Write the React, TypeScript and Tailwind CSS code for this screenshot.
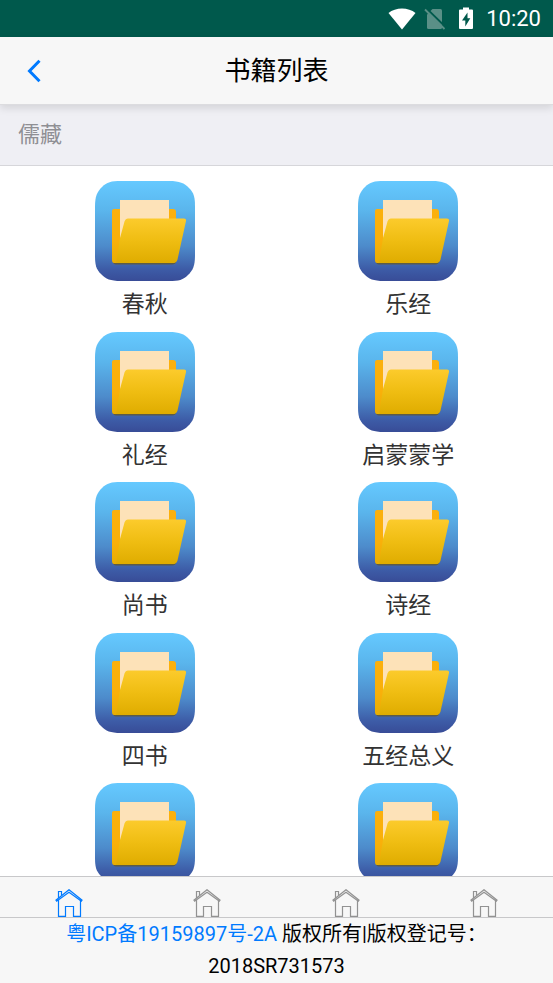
import clsx from 'clsx';

const books = ['春秋', '乐经', '礼经', '启蒙蒙学', '尚书', '诗经', '四书', '五经总义', '', ''];

const tabs = ['首页', '分类', '书架', '我的'];

const StatusBar: React.FC = () => (
  <div className="flex h-[37px] shrink-0 items-center justify-end bg-[#00594c] pr-3 text-white">
    <svg className="mr-2 h-[22px] w-7" viewBox="0 0 28 22" fill="currentColor">
      <path d="M14 21.5 0.5 5C4 2 9 0.4 14 0.4S24 2 27.5 5Z" />
    </svg>
    <svg className="mr-3 h-[22px] w-[22px]" viewBox="0 0 22 22">
      <path d="M8.500 1H16.500Q18 1 18 2.500V19.500Q18 21 16.500 21H4.500Q3 21 3 19.500V6.500Z" fill="#5a9087" />
      <path d="M2.500 0.500 21.500 19" stroke="#00594c" strokeWidth="2" />
      <path d="M1 1.500 20.500 21" stroke="#5a9087" strokeWidth="1.800" />
    </svg>
    <svg className="mr-3 h-[23px] w-4" viewBox="0 0 16 23">
      <path d="M5 0.500H11V2.500H14Q15 2.500 15 3.500V21Q15 22 14 22H2Q1 22 1 21V3.500Q1 2.500 2 2.500H5Z" fill="#fff" />
      <path d="M9.500 5.500 4 13.500H7.300V19.500L12.300 11.300H9.500Z" fill="#00594c" />
    </svg>
    <span className="text-[22px] leading-6">10:20</span>
  </div>
);

const FolderIcon: React.FC = () => (
  <svg className="h-[100px] w-[100px] shrink-0" viewBox="0 0 100 100" aria-hidden="true">
    <defs>
      <linearGradient id="sky" x1="0" y1="0" x2="0" y2="1">
        <stop offset="0" stopColor="#65c9ff" />
        <stop offset="0.3" stopColor="#5ab5ec" />
        <stop offset="0.65" stopColor="#4d8bcb" />
        <stop offset="0.88" stopColor="#3d5ca7" />
        <stop offset="1" stopColor="#384c97" />
      </linearGradient>
      <linearGradient id="back" x1="0" y1="0" x2="0" y2="1">
        <stop offset="0" stopColor="#fbb00d" />
        <stop offset="0.6" stopColor="#f9b00a" />
        <stop offset="1" stopColor="#e6ae04" />
      </linearGradient>
      <linearGradient id="front" x1="0" y1="0" x2="0" y2="1">
        <stop offset="0" stopColor="#fccb2c" />
        <stop offset="0.5" stopColor="#efbd12" />
        <stop offset="1" stopColor="#dfac00" />
      </linearGradient>
    </defs>
    <path
      d="M26 0H74C85 0 89 2 94 7S100 16 100 26V74C100 85 98 89 93 94S84 100 74 100H26C15 100 11 98 6 93S0 84 0 74V26C0 15 2 11 7 6S16 0 26 0Z"
      fill="url(#sky)"
    />
    <path d="M18 80H81Q81 83.500 77 83.500H21Q18 83.500 18 80Z" fill="#62592f" opacity="0.8" />
    <path d="M19 28H78Q81 28 81 31V80Q80 82 78 82H19Q17 82 17 79V30Q17 28 19 28Z" fill="url(#back)" />
    <path d="M25 19H74V60H25Z" fill="#fde2b8" />
    <path
      d="M33 37.500H89Q91.500 37.500 91 40L82.500 78.500Q81.500 82 78 82H21L25 57 29.500 40.500Q30.500 37.500 33 37.500Z"
      fill="url(#front)"
    />
  </svg>
);

const HouseIcon: React.FC = () => (
  <svg className="h-7 w-7" viewBox="0 0 28 28" fill="none" stroke="currentColor" strokeWidth="1.200" aria-hidden="true">
    <path d="M0.500 11.500 14 0.700 27.500 11.500M1.200 12.500 14 3.300 26.800 12.500" />
    <path d="M3.500 9V2.500H6.500V6.500M3.500 11V27.400H10.500V17.500H18.500V27.400H25.500V11" />
  </svg>
);

const App: React.FC = () => {
  return (
    <div
      lang="zh-CN"
      className="flex h-screen flex-col overflow-hidden bg-white font-[Roboto,'Noto_Sans_CJK_SC',sans-serif] text-black"
    >
      <StatusBar />

      <header className="relative z-10 grid h-[68px] shrink-0 grid-cols-[68px_1fr_68px] items-center border-b border-[#dcdcdf] bg-[#f7f7f7] shadow-[0_3px_8px_rgba(0,0,0,0.12)]">
        <button type="button" aria-label="返回" className="flex h-full items-center justify-center text-[#007aff]">
          <svg className="h-6 w-4" viewBox="0 0 16 24" fill="none" stroke="currentColor" strokeWidth="3">
            <path d="M13.500 1.700 3.500 12 13.500 22.300" />
          </svg>
        </button>
        <h1 className="text-center text-[26px] leading-8">书籍列表</h1>
      </header>

      <main className="flex min-h-0 flex-1 flex-col">
        <h2 className="flex h-[61px] shrink-0 items-center border-b border-[#d6d6da] bg-[#efeff4] px-[18px] text-[22px] leading-8 text-[#8f8f94]">
          儒藏
        </h2>
        <ul className="grid min-h-0 flex-1 auto-rows-[151px_150px] grid-cols-2 overflow-hidden px-[13px] pt-[15px]">
          {books.map((book, i) => (
            <li key={i}>
              <a href="#book" className="flex flex-col items-center text-[23px] leading-8 text-[#333333]">
                <FolderIcon />
                {book && <span className="mt-2">{book}</span>}
              </a>
            </li>
          ))}
        </ul>
      </main>

      <nav className="grid shrink-0 grid-cols-4 border-t border-[#c8c8ca] bg-[#f7f7f7] pt-3">
        {tabs.map((tab, i) => (
          <a
            key={tab}
            href="#tab"
            aria-label={tab}
            className={clsx('flex justify-center', i === 0 ? 'text-[#007aff]' : 'text-[#929292]')}
          >
            <HouseIcon />
          </a>
        ))}
      </nav>

      <footer className="shrink-0 border-t border-[#c8c8ca] bg-[#f7f7f7] px-2 pb-px text-center text-[20px] leading-8">
        <a href="#icp" className="text-[#007aff]">
          粤ICP备19159897号-2A
        </a>{' '}
        <span>版权所有|版权登记号：</span>
        <span className="inline-block">2018SR731573</span>
      </footer>
    </div>
  );
};

export default App;
